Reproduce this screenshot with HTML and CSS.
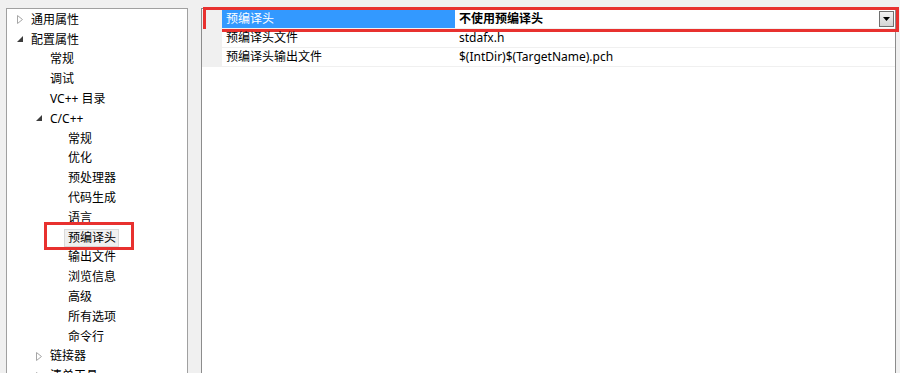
FILE: index.html
```html
<!DOCTYPE html>
<html lang="zh">
<head>
    <meta charset="UTF-8">
    <title>属性页</title>
    <link rel="stylesheet" href="styles.css">
</head>
<body>
    <div class="window">
        <div class="tree-panel">
            <ul class="tree">
                <li class="node l1"><span class="arrow"><svg width="6" height="9" viewBox="0 0 6 9"><polygon points="0.5,0.5 5.5,4.5 0.5,8.5" fill="#fff" stroke="#a6a6a6"/></svg></span><span class="label">通用属性</span></li>
                <li class="node l1"><span class="arrow"><svg width="7" height="7" viewBox="0 0 7 7"><polygon points="6,0 6,6 0,6" fill="#3c3c3c"/></svg></span><span class="label">配置属性</span></li>
                <li class="node l2"><span class="arrow"></span><span class="label">常规</span></li>
                <li class="node l2"><span class="arrow"></span><span class="label">调试</span></li>
                <li class="node l2"><span class="arrow"></span><span class="label">VC++ 目录</span></li>
                <li class="node l2"><span class="arrow"><svg width="7" height="7" viewBox="0 0 7 7"><polygon points="6,0 6,6 0,6" fill="#3c3c3c"/></svg></span><span class="label">C/C++</span></li>
                <li class="node l3"><span class="arrow"></span><span class="label">常规</span></li>
                <li class="node l3"><span class="arrow"></span><span class="label">优化</span></li>
                <li class="node l3"><span class="arrow"></span><span class="label">预处理器</span></li>
                <li class="node l3"><span class="arrow"></span><span class="label">代码生成</span></li>
                <li class="node l3"><span class="arrow"></span><span class="label">语言</span></li>
                <li class="node l3"><span class="arrow"></span><span class="label selected">预编译头</span></li>
                <li class="node l3"><span class="arrow"></span><span class="label">输出文件</span></li>
                <li class="node l3"><span class="arrow"></span><span class="label">浏览信息</span></li>
                <li class="node l3"><span class="arrow"></span><span class="label">高级</span></li>
                <li class="node l3"><span class="arrow"></span><span class="label">所有选项</span></li>
                <li class="node l3"><span class="arrow"></span><span class="label">命令行</span></li>
                <li class="node l2"><span class="arrow"><svg width="6" height="9" viewBox="0 0 6 9"><polygon points="0.5,0.5 5.5,4.5 0.5,8.5" fill="#fff" stroke="#a6a6a6"/></svg></span><span class="label">链接器</span></li>
                <li class="node l2"><span class="arrow"><svg width="6" height="9" viewBox="0 0 6 9"><polygon points="0.5,0.5 5.5,4.5 0.5,8.5" fill="#fff" stroke="#a6a6a6"/></svg></span><span class="label">清单工具</span></li>
            </ul>
        </div>
        <div class="grid-panel">
            <div class="grid">
                <div class="row active">
                    <div class="gutter"></div>
                    <div class="name">预编译头</div>
                    <div class="value">
                        <span class="bold">不使用预编译头</span>
                        <span class="drop"><svg width="7" height="4" viewBox="0 0 7 4"><polygon points="0,0 7,0 3.5,4" fill="#000"/></svg></span>
                    </div>
                </div>
                <div class="row">
                    <div class="gutter"></div>
                    <div class="name">预编译头文件</div>
                    <div class="value">stdafx.h</div>
                </div>
                <div class="row">
                    <div class="gutter"></div>
                    <div class="name">预编译头输出文件</div>
                    <div class="value">$(IntDir)$(TargetName).pch</div>
                </div>
            </div>
        </div>
    </div>
</body>
</html>
```

FILE: styles.css
```css
body {
    margin: 0;
    padding: 0;
    background-color: #f0f0f0;
    font-family: "Noto Sans", "Noto Sans CJK SC", sans-serif;
    font-size: 12px;
    color: #000;
    overflow: hidden;
}
.window {
    display: flex;
    align-items: flex-start;
    padding: 8px 0 0 6px;
    gap: 13px;
    height: 400px;
}
.tree-panel {
    width: 180px;
    height: 392px;
    background-color: #fff;
    border: 1px solid #a0a0a0;
}
.tree {
    list-style: none;
    margin: 0;
    padding: 1px 0 0 0;
}
.node {
    display: flex;
    align-items: center;
    height: 19.8px;
    line-height: 16px;
    white-space: nowrap;
}
.l1 { padding-left: 7px; }
.l2 { padding-left: 26px; }
.l3 { padding-left: 44px; }
.arrow {
    width: 17px;
    display: flex;
    align-items: center;
    padding-left: 3px;
    box-sizing: border-box;
}
.label {
    position: relative;
}
.label.selected {
    background-color: #f0f0f0;
    border: 1px solid #dadada;
    margin-left: -4px;
    padding: 0 2px 0 3px;
}
.label.selected::after {
    content: '';
    position: absolute;
    left: -21px;
    top: -8px;
    right: -16px;
    bottom: -4px;
    border: 3px solid #e8312f;
}
.grid-panel {
    width: 693px;
    height: 392px;
    background-color: #fff;
    border: 1px solid #8c8c8c;
}
.grid {
    padding-top: 1px;
}
.row {
    display: flex;
    height: 18px;
    border-bottom: 1px solid #f0f0f0;
    line-height: 18px;
    position: relative;
}
.gutter {
    width: 20px;
    background-color: #f0f0f0;
}
.name {
    width: 229px;
    padding-left: 4px;
    white-space: nowrap;
}
.value {
    flex: 1;
    padding-left: 4px;
    display: flex;
    align-items: center;
    justify-content: space-between;
    white-space: nowrap;
}
.row.active .name {
    background-color: #3399ff;
    color: #fff;
}
.row.active::after {
    content: '';
    position: absolute;
    left: 1px;
    top: -3px;
    right: -4px;
    bottom: -4px;
    border: 3px solid #e8312f;
}
.bold {
    font-weight: bold;
}
.drop {
    width: 13px;
    height: 14px;
    margin-right: 1px;
    border: 1px solid #707070;
    background: linear-gradient(#f2f2f2, #d4d4d4);
    display: flex;
    align-items: center;
    justify-content: center;
}
```
